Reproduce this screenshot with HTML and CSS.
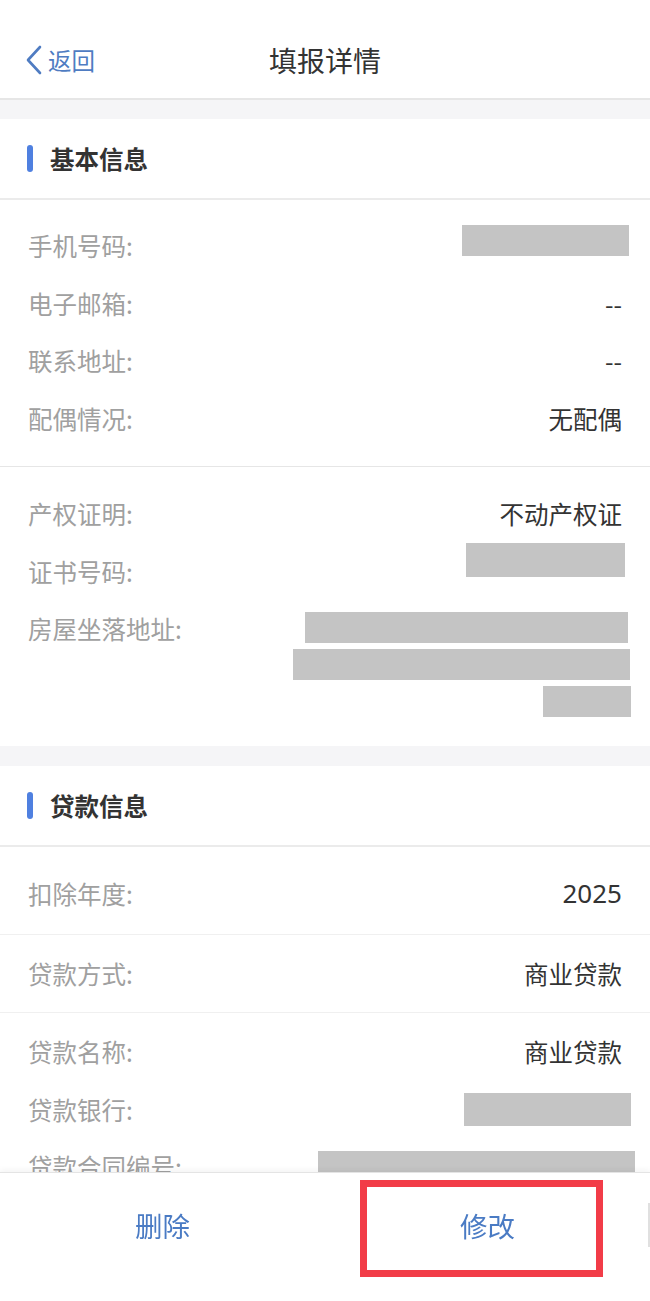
FILE: index.html
```html
<!DOCTYPE html>
<html lang="zh-CN">
<head>
  <meta charset="UTF-8" />
  <title>填报详情</title>
  <link rel="stylesheet" href="styles.css">
</head>
<body>
  <header class="topbar">
    <a class="back" href="#">
      <svg class="back-icon" width="18" height="30" viewBox="0 0 18 30">
        <polyline points="15,2 3,15 15,28" fill="none" stroke="#4f7cc2" stroke-width="2.6" stroke-linecap="round" stroke-linejoin="round" />
      </svg>
      <span>返回</span>
    </a>
    <h1 class="title">填报详情</h1>
    <div></div>
  </header>

  <section class="card">
    <div class="card-head"><span class="bar"></span>基本信息</div>

    <div class="group group-first">
      <div class="row"><span class="label">手机号码:</span><span class="redact r-phone"></span></div>
      <div class="row"><span class="label">电子邮箱:</span><span class="value">--</span></div>
      <div class="row"><span class="label">联系地址:</span><span class="value">--</span></div>
      <div class="row"><span class="label">配偶情况:</span><span class="value">无配偶</span></div>
    </div>

    <div class="group group-house">
      <div class="row"><span class="label">产权证明:</span><span class="value">不动产权证</span></div>
      <div class="row"><span class="label">证书号码:</span><span class="redact r-cert"></span></div>
      <div class="row row-multi">
        <span class="label">房屋坐落地址:</span>
        <div class="lines">
          <span class="redact r-addr1"></span>
          <span class="redact r-addr2"></span>
          <span class="redact r-addr3"></span>
        </div>
      </div>
    </div>
  </section>

  <section class="card">
    <div class="card-head"><span class="bar"></span>贷款信息</div>

    <div class="group group-year">
      <div class="row"><span class="label">扣除年度:</span><span class="value num">2025</span></div>
    </div>
    <div class="group group-line">
      <div class="row"><span class="label">贷款方式:</span><span class="value">商业贷款</span></div>
    </div>
    <div class="group group-line">
      <div class="row"><span class="label">贷款名称:</span><span class="value">商业贷款</span></div>
      <div class="row"><span class="label">贷款银行:</span><span class="redact r-bank"></span></div>
      <div class="row"><span class="label">贷款合同编号:</span><span class="redact r-contract"></span></div>
      <div class="row"><span class="label">贷款期限:</span><span class="value">--</span></div>
      <div class="row"><span class="label">首次还款日期:</span><span class="value">--</span></div>
    </div>
  </section>

  <footer class="actions">
    <button class="action">删除</button>
    <button class="action">修改</button>
    <div class="highlight"></div>
  </footer>
</body>
</html>
```

FILE: styles.css
```css
html, body {
  margin: 0;
  padding: 0;
  background: #f5f5f7;
  font-family: "Noto Sans CJK SC", "Noto Sans", sans-serif;
  color: #333;
}

.topbar {
  display: grid;
  grid-template-columns: 1fr auto 1fr;
  align-items: center;
  height: 76px;
  padding: 22px 0 0;
  background: #fff;
  border-bottom: 2px solid #e6e6e6;
  margin-bottom: 19px;
}

.back {
  display: flex;
  align-items: center;
  gap: 5px;
  padding-left: 25px;
  color: #4f7cc2;
  font-size: 23.5px;
  text-decoration: none;
}

.back-icon {
  display: block;
}

.title {
  margin: 0;
  font-size: 28px;
  font-weight: 400;
  color: #333;
}

.card {
  background: #fff;
  margin-bottom: 20px;
}

.card-head {
  display: flex;
  align-items: center;
  height: 79px;
  padding-left: 27px;
  font-size: 24.5px;
  font-weight: 700;
  color: #333;
  border-bottom: 2px solid #ebebeb;
}

.bar {
  width: 6px;
  height: 27px;
  border-radius: 3px;
  background: #4f80e0;
  margin-right: 17px;
}

.group {
  padding: 0 28px;
}

.group-first {
  padding-top: 17px;
  padding-bottom: 19px;
  border-bottom: 1px solid #e6e6e6;
}

.group-house {
  padding-top: 18px;
  padding-bottom: 29px;
}

.group-year {
  padding-top: 18px;
  padding-bottom: 11px;
  border-bottom: 1px solid #f0f0f0;
}

.group-line {
  padding-top: 10px;
  padding-bottom: 10px;
  border-bottom: 1px solid #f0f0f0;
}

.row {
  display: flex;
  justify-content: space-between;
  align-items: center;
  line-height: 57.5px;
  font-size: 24.5px;
}

.row-multi {
  align-items: flex-start;
}

.label {
  color: #a0a0a0;
}

.value {
  color: #333;
}

.num {
  font-family: "Noto Sans", sans-serif;
  font-size: 26px;
}

.lines {
  display: flex;
  flex-direction: column;
  align-items: flex-end;
  gap: 6px;
  padding-top: 12px;
}

.redact {
  display: block;
  height: 31px;
  background: #c4c4c4;
}

.r-phone { width: 167px; margin-right: -7px; margin-top: -10px; }
.r-cert { width: 159px; height: 34px; margin-right: -3px; margin-top: -22px; }
.r-addr1 { width: 323px; margin-right: -6px; }
.r-addr2 { width: 337px; margin-right: -8px; }
.r-addr3 { width: 88px; margin-right: -9px; }
.r-bank { width: 167px; height: 33px; margin-right: -9px; }
.r-contract { width: 317px; margin-right: -13px; }

.actions {
  position: fixed;
  left: 0;
  right: 0;
  bottom: 0;
  height: 128px;
  display: flex;
  background: #fff;
  border-top: 1px solid #e4e4e4;
  box-shadow: 0 -2px 6px rgba(0, 0, 0, 0.05);
}

.actions::after {
  content: "";
  position: absolute;
  right: 0;
  top: 30px;
  width: 2px;
  height: 44px;
  background: #e0e0e0;
}

.action {
  flex: 1;
  height: 104px;
  border: none;
  background: none;
  font-family: inherit;
  font-size: 27.5px;
  color: #4a7bc4;
}

.highlight {
  position: absolute;
  left: 360px;
  top: 7px;
  width: 229px;
  height: 83px;
  border: 7px solid #f23c48;
}
```
